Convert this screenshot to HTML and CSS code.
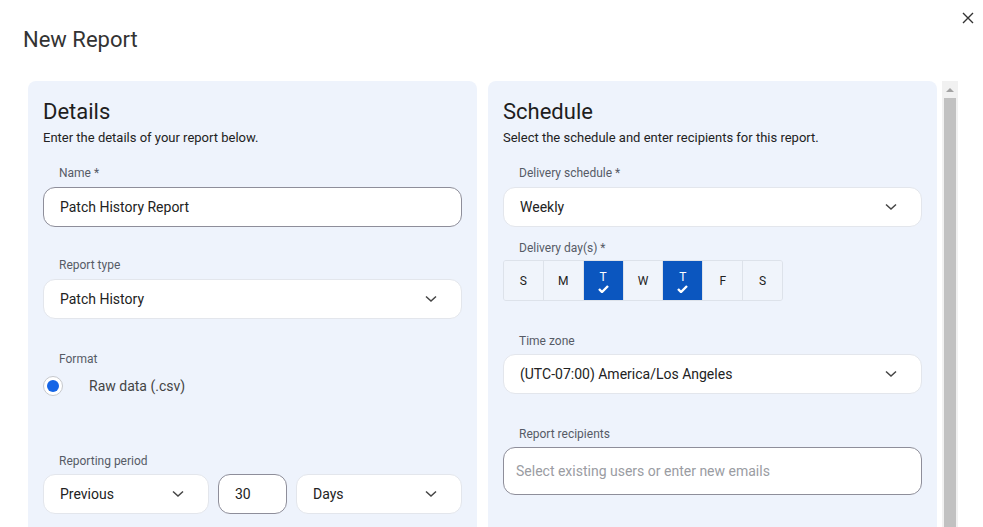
FILE: index.html
```html
<!DOCTYPE html>
<html lang="en">
<head>
<meta charset="utf-8">
<title>New Report</title>
<link rel="stylesheet" href="styles.css">
</head>
<body>
<div class="dialog">
  <header class="dlg-head">
    <h1 class="dlg-title">New Report</h1>
    <button class="close-btn" aria-label="Close">
      <svg width="12" height="12" viewBox="0 0 12 12"><path d="M1 1 L11 11 M11 1 L1 11" stroke="#333" stroke-width="1.4" fill="none"/></svg>
    </button>
  </header>
  <div class="dlg-body">
    <section class="panel">
      <h2 class="panel-title">Details</h2>
      <p class="panel-sub">Enter the details of your report below.</p>

      <div class="field f-name">
        <label class="lbl">Name *</label>
        <div class="input outlined">Patch History Report</div>
      </div>

      <div class="field f-type">
        <label class="lbl">Report type</label>
        <div class="input select">Patch History
          <svg class="chev" width="12" height="8" viewBox="0 0 12 8"><path d="M1 1.5 L6 6 L11 1.5" stroke="#444" stroke-width="1.5" fill="none"/></svg>
        </div>
      </div>

      <div class="field f-format">
        <label class="lbl">Format</label>
        <div class="radio-row">
          <span class="radio"><span class="radio-dot"></span></span>
          <span class="radio-text">Raw data (.csv)</span>
        </div>
      </div>

      <div class="field f-period">
        <label class="lbl">Reporting period</label>
        <div class="period-row">
          <div class="input select">Previous
            <svg class="chev" width="12" height="8" viewBox="0 0 12 8"><path d="M1 1.5 L6 6 L11 1.5" stroke="#444" stroke-width="1.5" fill="none"/></svg>
          </div>
          <div class="input outlined">30</div>
          <div class="input select">Days
            <svg class="chev" width="12" height="8" viewBox="0 0 12 8"><path d="M1 1.5 L6 6 L11 1.5" stroke="#444" stroke-width="1.5" fill="none"/></svg>
          </div>
        </div>
      </div>
    </section>

    <section class="panel">
      <h2 class="panel-title">Schedule</h2>
      <p class="panel-sub">Select the schedule and enter recipients for this report.</p>

      <div class="field f-sched">
        <label class="lbl">Delivery schedule *</label>
        <div class="input select">Weekly
          <svg class="chev" width="12" height="8" viewBox="0 0 12 8"><path d="M1 1.5 L6 6 L11 1.5" stroke="#444" stroke-width="1.5" fill="none"/></svg>
        </div>
      </div>

      <div class="field f-days">
        <label class="lbl">Delivery day(s) *</label>
        <div class="days">
          <span class="day">S</span>
          <span class="day">M</span>
          <span class="day on">T<svg class="tick" width="11" height="8" viewBox="0 0 11 8"><path d="M1 4 L4 7 L10 1" stroke="#fff" stroke-width="2.4" fill="none"/></svg></span>
          <span class="day">W</span>
          <span class="day on">T<svg class="tick" width="11" height="8" viewBox="0 0 11 8"><path d="M1 4 L4 7 L10 1" stroke="#fff" stroke-width="2.4" fill="none"/></svg></span>
          <span class="day">F</span>
          <span class="day">S</span>
        </div>
      </div>

      <div class="field f-tz">
        <label class="lbl">Time zone</label>
        <div class="input select">(UTC-07:00) America/Los Angeles
          <svg class="chev" width="12" height="8" viewBox="0 0 12 8"><path d="M1 1.5 L6 6 L11 1.5" stroke="#444" stroke-width="1.5" fill="none"/></svg>
        </div>
      </div>

      <div class="field f-recip">
        <label class="lbl">Report recipients</label>
        <div class="input outlined tall placeholder">Select existing users or enter new emails</div>
      </div>
    </section>

    <div class="scrollbar">
      <div class="sb-up"></div>
      <div class="sb-thumb"></div>
    </div>
  </div>
</div>
</body>
</html>
```
FILE: styles.css
```css
html, body {
  margin: 0;
  padding: 0;
  height: 527px;
  overflow: hidden;
  background: #fff;
  font-family: Roboto, "Liberation Sans", Arial, sans-serif;
  color: #222;
}

.dialog {
  position: relative;
  height: 527px;
}

.dlg-head {
  padding: 26px 23px 0;
}

.dlg-title {
  margin: 0;
  font-size: 22px;
  line-height: 28px;
  font-weight: 400;
  color: #333;
}

.close-btn {
  position: absolute;
  top: 12px;
  right: 9px;
  width: 12px;
  height: 12px;
  padding: 0;
  border: 0;
  background: none;
  display: flex;
}

.dlg-body {
  margin-top: 27px;
  padding-left: 28px;
  display: flex;
  align-items: flex-start;
  gap: 11px;
}

.panel {
  width: 449px;
  height: 480px;
  box-sizing: border-box;
  padding: 17px 15px 0 15px;
  background: #eef3fc;
  border-radius: 8px;
}

.panel-title {
  margin: 0;
  font-size: 22px;
  line-height: 28px;
  font-weight: 400;
  color: #1e1e1e;
}

.panel-sub {
  margin: 3px 0 0;
  font-size: 13px;
  line-height: 18px;
  color: #222;
}

.field {
  display: flex;
  flex-direction: column;
}

.lbl {
  font-size: 12px;
  line-height: 16px;
  color: #565b66;
  padding: 1px 0 0 16px;
  margin-bottom: 6px;
}

.f-name, .f-sched { margin-top: 17px; }
.f-type { margin-top: 29px; }
.f-format { margin-top: 31px; }
.f-period { margin-top: 56px; }
.f-period .lbl { margin-bottom: 5px; }
.f-days { margin-top: 12px; }
.f-days .lbl { margin-bottom: 4px; }
.f-tz { margin-top: 30px; }
.f-tz .lbl { padding-top: 2px; margin-bottom: 5px; }
.f-recip { margin-top: 30px; }
.f-recip .lbl { padding-top: 2px; margin-bottom: 5px; }

.input {
  box-sizing: border-box;
  height: 40px;
  display: flex;
  align-items: center;
  padding: 0 16px;
  background: #fff;
  border-radius: 12px;
  font-size: 14px;
  color: #222;
  position: relative;
}

.outlined {
  border: 1px solid #8e8e9a;
}

.select {
  border: 1px solid #e3e6ec;
  justify-content: space-between;
}

.chev {
  margin-right: 8px;
}

.tall {
  height: 48px;
  padding-left: 12px;
}

.placeholder {
  color: #9a9ca2;
}

.radio-row {
  display: flex;
  align-items: center;
  height: 20px;
  margin-top: 3px;
}

.radio {
  box-sizing: border-box;
  width: 20px;
  height: 20px;
  border: 1px solid #c6c8cc;
  border-radius: 50%;
  background: #fff;
  display: flex;
  align-items: center;
  justify-content: center;
}

.radio-dot {
  width: 12px;
  height: 12px;
  border-radius: 50%;
  background: #1565e6;
}

.radio-text {
  margin-left: 26px;
  font-size: 14px;
  color: #444;
}

.period-row {
  display: grid;
  grid-template-columns: 1fr 69px 1fr;
  gap: 9px;
}

.days {
  display: flex;
  box-sizing: border-box;
  width: 280px;
  height: 41px;
  border: 1px solid #dde2ea;
  border-radius: 3px;
  overflow: hidden;
}

.day {
  box-sizing: border-box;
  flex: 1;
  display: flex;
  flex-direction: column;
  align-items: center;
  justify-content: center;
  font-size: 12px;
  color: #222;
  background: #f0f4fb;
}

.day + .day {
  border-left: 1px solid #dde2ea;
}

.day.on {
  background: #0b56bf;
  color: #fff;
  line-height: 14px;
  padding-top: 2px;
}

.tick {
  margin-top: 1px;
}

.scrollbar {
  margin-left: -6px;
  width: 16px;
  height: 446px;
  background: #f1f1f1;
  display: flex;
  flex-direction: column;
  align-items: center;
}

.sb-up {
  margin-top: 7px;
  width: 0;
  height: 0;
  border-left: 4px solid transparent;
  border-right: 4px solid transparent;
  border-bottom: 4px solid #a3a3a3;
}

.sb-thumb {
  margin-top: 6px;
  width: 12px;
  flex: 1;
  background: #c1c1c1;
}
```
